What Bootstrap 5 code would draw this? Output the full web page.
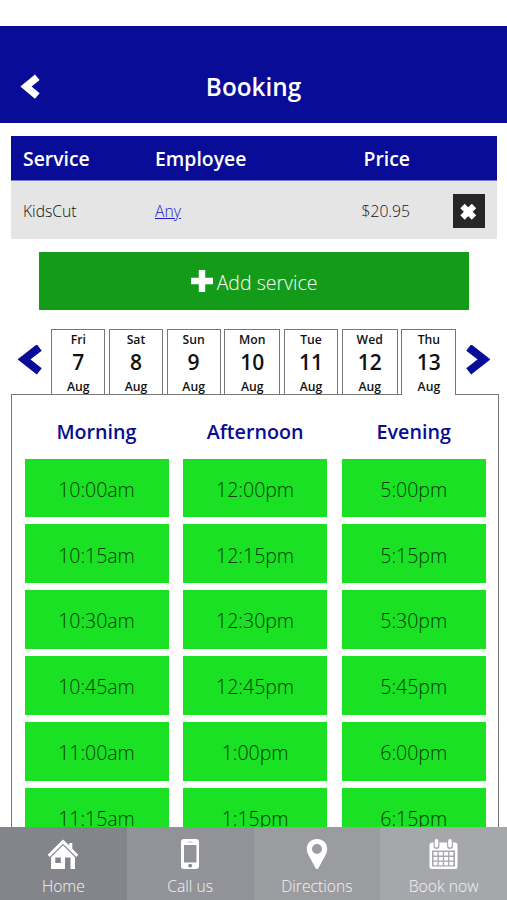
<!DOCTYPE html>
<html lang="en">
<head>
<meta charset="utf-8">
<meta name="viewport" content="width=device-width, initial-scale=1">
<title>Booking</title>
<link href="https://cdn.jsdelivr.net/npm/bootstrap@5.3.0/dist/css/bootstrap.min.css" rel="stylesheet">
<style>
:root { --navy: #080c96; }
body { font-family: "Open Sans", sans-serif; color: #111; background: #fff; }
.screen { height: 900px; padding-top: 25.5px; }
.topbar { height: 97.5px; background: var(--navy); padding: 25px 20px 0; }
.topbar h1 { font-size: 24.3px; font-weight: 600; }
.side { width: 22px; }
.cart { margin: 12.5px 10px 0 11px; }
.cart-row { display: grid; grid-template-columns: 132px 168px 87px 1fr; padding: 0 12px; align-items: center; }
.cart-head { height: 45.5px; background: var(--navy); color: #fff; font-size: 19.4px; font-weight: 600; border-bottom: 1px solid #7779c4; padding-top: 2px; }
.cart-item { height: 58px; background: #e5e5e5; font-size: 15.7px; font-weight: 300; color: #111; padding-top: 1px; }
.cart-item span { padding-top: 2px; }
.cart-item a { color: #2416c8; }
.remove { width: 32px; height: 34px; background: #272527; border-radius: 0; }
.add { height: 58.5px; margin: 12.5px 38px 0 39px; background: #149b19; border-radius: 0; color: #fff; font-size: 19.5px; font-weight: 300; }
.add span { padding-top: 3px; }
.add:hover { background: #118615; color: #fff; }
.days { height: 65px; margin: 19px 17px 0 18px; }
.day-list { display: grid; grid-template-columns: 54px 54px 54px 56px 54px 56px 55px; column-gap: 3.7px; width: 405.5px; }
.day { height: 65px; border: 1px solid #777; border-bottom: 0; font-size: 12.2px; font-weight: 600; line-height: 17px; padding-top: 1px; color: #111; background: #fff; }
.day b { font-size: 21px; font-weight: 600; line-height: 29.5px; }
.day.current { height: 66px; }
.panel { height: 433px; margin: 0 8px 0 11px; border: 1px solid #777; border-bottom: 0; padding: 21px 12px 0 12.5px; }
.slots { display: grid; grid-template-columns: repeat(3, 144px); column-gap: 14.6px; }
.slots h2 { font-size: 19.7px; font-weight: 600; line-height: 32px; color: var(--navy); margin: 0 0 10.5px; }
.slot { height: 58.5px; margin-bottom: 7.4px; padding: 3px 0 0; background: #1ae124; color: #003c00; border-radius: 0; font-size: 19.5px; font-weight: 300; }
.slot:hover { background: #17ca20; color: #003c00; }
.tabbar { height: 73px; }
.tabbar a { flex: 1 1 0; color: #f4f4f4; font-size: 15.7px; font-weight: 300; line-height: 22px; padding-top: 11px; }
.tabbar svg { margin-bottom: 5px; }
.t1 { background: #84858a; } .t2 { background: #929398; } .t3 { background: #9b9ca0; } .t4 { background: #a6a7ab; }
</style>
<script src="https://cdn.jsdelivr.net/npm/bootstrap@5.3.0/dist/js/bootstrap.bundle.min.js"></script>
</head>
<body>
<div class="screen d-flex flex-column overflow-hidden">
  <header class="topbar d-flex align-items-center justify-content-between text-white flex-shrink-0">
    <a href="#" class="side d-flex" aria-label="Back"><svg width="22" height="26" viewBox="0 0 22 26"><path d="M17.300 3.200 6 12.600 17.300 22" fill="none" stroke="#fff" stroke-width="7.200"/></svg></a>
    <h1 class="m-0">Booking</h1>
    <span class="side"></span>
  </header>

  <section class="cart flex-shrink-0">
    <div class="cart-row cart-head"><span>Service</span><span>Employee</span><span class="text-end">Price</span><span></span></div>
    <div class="cart-row cart-item"><span>KidsCut</span><span><a href="#">Any</a></span><span class="text-end">$20.95</span>
      <button class="remove btn p-0 border-0 d-flex align-items-center justify-content-center ms-auto" aria-label="Remove"><svg width="20" height="20" viewBox="0 0 20 20"><path d="m3.500 5 11.500 11.500M15 5 3.500 16.500" stroke="#fff" stroke-width="6.200"/></svg></button></div>
  </section>

  <button class="add btn border-0 d-flex align-items-center justify-content-center p-0 flex-shrink-0"><svg class="me-1" width="22" height="22" viewBox="0 0 22 22"><path d="M11 0v22M0 11h22" stroke="#fff" stroke-width="6.400"/></svg><span>Add service</span></button>

  <nav class="days d-flex justify-content-between flex-shrink-0">
    <a href="#" class="pt-3" aria-label="Earlier days"><svg width="26" height="30" viewBox="0 0 26 30" class="d-block"><path d="M21.300 2.500 6 14.300 21.300 26.300" fill="none" stroke="#080c96" stroke-width="8"/></svg></a>
    <div class="day-list text-center">
      <div class="day d-flex flex-column">Fri<b>7</b>Aug</div>
      <div class="day d-flex flex-column">Sat<b>8</b>Aug</div>
      <div class="day d-flex flex-column">Sun<b>9</b>Aug</div>
      <div class="day d-flex flex-column">Mon<b>10</b>Aug</div>
      <div class="day d-flex flex-column">Tue<b>11</b>Aug</div>
      <div class="day d-flex flex-column">Wed<b>12</b>Aug</div>
      <div class="day current d-flex flex-column position-relative">Thu<b>13</b>Aug</div>
    </div>
    <a href="#" class="pt-3" aria-label="Later days"><svg width="26" height="30" viewBox="0 0 26 30" class="d-block"><path d="M4.700 2.500 20 14.300 4.700 26.300" fill="none" stroke="#080c96" stroke-width="8"/></svg></a>
  </nav>

  <main class="panel overflow-hidden flex-shrink-0">
    <div class="slots text-center">
      <h2>Morning</h2><h2>Afternoon</h2><h2>Evening</h2>
      <button class="slot btn border-0">10:00am</button><button class="slot btn border-0">12:00pm</button><button class="slot btn border-0">5:00pm</button>
      <button class="slot btn border-0">10:15am</button><button class="slot btn border-0">12:15pm</button><button class="slot btn border-0">5:15pm</button>
      <button class="slot btn border-0">10:30am</button><button class="slot btn border-0">12:30pm</button><button class="slot btn border-0">5:30pm</button>
      <button class="slot btn border-0">10:45am</button><button class="slot btn border-0">12:45pm</button><button class="slot btn border-0">5:45pm</button>
      <button class="slot btn border-0">11:00am</button><button class="slot btn border-0">1:00pm</button><button class="slot btn border-0">6:00pm</button>
      <button class="slot btn border-0">11:15am</button><button class="slot btn border-0">1:15pm</button><button class="slot btn border-0">6:15pm</button>
    </div>
  </main>

  <nav class="tabbar d-flex flex-shrink-0">
    <a href="#" class="t1 d-flex flex-column align-items-center text-decoration-none"><svg width="32" height="32" viewBox="0 0 32 32" fill="#fff"><path d="M16 1.500 22.300 7.600V5h3v5.700l6 6-1.900 2.200L16 5.700 2.600 18.900.7 16.700z"/><path fill-rule="evenodd" d="M16 7.300 28 19.200V31h-4.500V19.500H18V31H4V19.200zM8.300 19.500V25h5.500v-5.500z"/></svg>Home</a>
    <a href="#" class="t2 d-flex flex-column align-items-center text-decoration-none"><svg width="32" height="32" viewBox="0 0 32 32"><rect x="7" y="1" width="18" height="30" rx="3" fill="#fff"/><path d="M10 7h12.500v17.500H10z" fill="#929398"/><path d="M14 4h4.500" stroke="#bbbcc0"/><circle cx="16.200" cy="27.700" r="1.900" fill="#85868b"/></svg>Call us</a>
    <a href="#" class="t3 d-flex flex-column align-items-center text-decoration-none"><svg width="32" height="32" viewBox="0 0 32 32"><path fill="#fff" fill-rule="evenodd" d="M16 1C10 1 5.800 5.300 5.800 11c0 3 1.400 5.500 2.700 8l5.800 10.500c.9 2 2.500 2 3.400 0L23.500 19c1.300-2.500 2.700-5 2.700-8C26.200 5.300 22 1 16 1zm0 5a5 5 0 1 1 0 10 5 5 0 0 1 0-10z"/></svg>Directions</a>
    <a href="#" class="t4 d-flex flex-column align-items-center text-decoration-none"><svg width="32" height="32" viewBox="0 0 32 32"><rect x="1.500" y="4.500" width="28" height="26.500" rx="2.500" fill="#fff"/><path d="M8.500 3v5M22 3v5" stroke="#a6a7ab" stroke-width="6" stroke-linecap="round"/><path d="M8.500 2.800v5M22 2.800v5" stroke="#fff" stroke-width="3.600" stroke-linecap="round"/><path d="M4 12.500h23v16H4z" fill="#a6a7ab"/><path fill="#fff" d="M5.500 14h4v3.500h-4zm5.300 0h4v3.500h-4zm5.300 0h4v3.500h-4zm5.300 0h4v3.500h-4zM5.500 18.900h4v3.500h-4zm5.300 0h4v3.500h-4zm5.300 0h4v3.500h-4zm5.300 0h4v3.500h-4zM5.500 23.800h4v3.500h-4zm5.300 0h4v3.500h-4zm5.300 0h4v3.500h-4zm5.300 0h4v3.500h-4z"/></svg>Book now</a>
  </nav>
</div>
</body>
</html>
